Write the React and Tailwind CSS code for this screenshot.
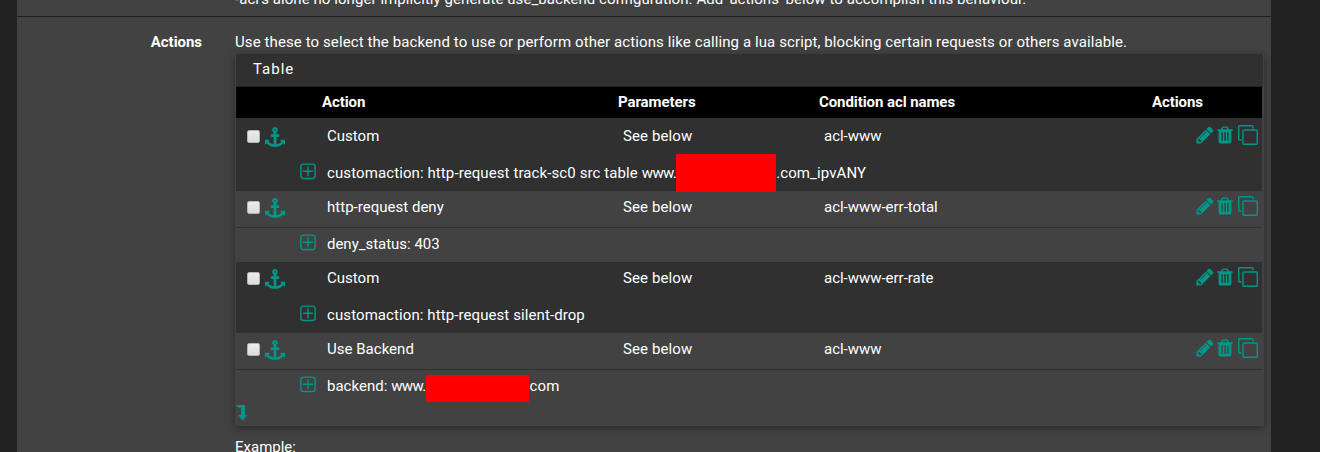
const PATHS = {
  anchor:
    'M960 256q0-26-19-45t-45-19-45 19-19 45 19 45 45 19 45-19 19-45zm832 928v352q0 22-20 30-8 2-12 2-12 0-23-9l-93-93q-119 143-318.5 226.5t-429.5 83.5-429.5-83.5-318.5-226.5l-93 93q-9 9-23 9-4 0-12-2-20-8-20-30v-352q0-14 9-23t23-9h352q22 0 30 20 8 19-7 35l-100 100q67 91 189.5 153.5t271.5 82.5v-647h-192q-26 0-45-19t-19-45v-128q0-26 19-45t45-19h192v-163q-58-34-93-92.5t-35-128.5q0-106 75-181t181-75 181 75 75 181q0 70-35 128.5t-93 92.5v163h192q26 0 45 19t19 45v128q0 26-19 45t-45 19h-192v647q149-20 271.5-82.5t189.5-153.5l-100-100q-15-16-7-35 8-20 30-20h352q14 0 23 9t9 23z',
  pencil:
    'M491 1536l91-91-235-235-91 91v107h128v128h107zm523-928q0-22-22-22-10 0-17 7l-542 542q-7 7-7 17 0 22 22 22 10 0 17-7l542-542q7-7 7-17zm-54-192l416 416-832 832h-416v-416zm683 96q0 53-37 90l-166 166-416-416 166-165q36-38 90-38 53 0 91 38l235 234q37 39 37 91z',
  trash:
    'M704 1376v-704q0-14-9-23t-23-9h-64q-14 0-23 9t-9 23v704q0 14 9 23t23 9h64q14 0 23-9t9-23zm256 0v-704q0-14-9-23t-23-9h-64q-14 0-23 9t-9 23v704q0 14 9 23t23 9h64q14 0 23-9t9-23zm256 0v-704q0-14-9-23t-23-9h-64q-14 0-23 9t-9 23v704q0 14 9 23t23 9h64q14 0 23-9t9-23zm-544-992h448l-48-117q-7-9-17-11h-317q-10 2-17 11zm928 32v64q0 14-9 23t-23 9h-96v948q0 83-47 143.5t-113 60.5h-832q-66 0-113-58.5t-47-141.5v-952h-96q-14 0-23-9t-9-23v-64q0-14 9-23t23-9h309l70-167q15-37 54-63t79-26h320q40 0 79 26t54 63l70 167h309q14 0 23 9t9 23z',
  clone:
    'M1664 1632v-1088q0-13-9.5-22.5t-22.5-9.5h-1088q-13 0-22.5 9.5t-9.5 22.5v1088q0 13 9.5 22.5t22.5 9.5h1088q13 0 22.5-9.5t9.5-22.5zm128-1088v1088q0 66-47 113t-113 47h-1088q-66 0-113-47t-47-113v-1088q0-66 47-113t113-47h1088q66 0 113 47t47 113zm-384-384v160h-128v-160q0-13-9.5-22.5t-22.5-9.5h-1088q-13 0-22.5 9.5t-9.5 22.5v1088q0 13 9.5 22.5t22.5 9.5h160v128h-160q-66 0-113-47t-47-113v-1088q0-66 47-113t113-47h1088q66 0 113 47t47 113z',
  plus:
    'M1344 800v64q0 14-9 23t-23 9h-352v352q0 14-9 23t-23 9h-64q-14 0-23-9t-9-23v-352h-352q-14 0-23-9t-9-23v-64q0-14 9-23t23-9h352v-352q0-14 9-23t23-9h64q14 0 23 9t9 23v352h352q14 0 23 9t9 23zm128 448v-832q0-66-47-113t-113-47h-832q-66 0-113 47t-47 113v832q0 66 47 113t113 47h832q66 0 113-47t47-113zm128-832v832q0 119-84.5 203.5t-203.5 84.5h-832q-119 0-203.5-84.5t-84.5-203.5v-832q0-119 84.5-203.5t203.5-84.5h832q119 0 203.5 84.5t84.5 203.5z',
};

function Icon({ name, className = '' }) {
  return (
    <svg viewBox="0 0 1792 1792" className={`size-5 shrink-0 fill-[#009688] ${className}`}>
      <path d={PATHS[name]} />
    </svg>
  );
}

const ROWS = [
  {
    action: 'Custom',
    acl: 'acl-www',
    dark: true,
    before: 'customaction: http-request track-sc0 src table ',
    host: 'www.',
    tracking: 'tracking-[0.1px]',
    bar: 'h-[38px] w-[100px] -mt-[3px]',
    after: '.com_ipvANY',
  },
  {
    action: 'http-request deny',
    acl: 'acl-www-err-total',
    before: 'deny_status: 403',
    tracking: 'tracking-[-0.02px]',
  },
  {
    action: 'Custom',
    acl: 'acl-www-err-rate',
    dark: true,
    before: 'customaction: http-request silent-drop',
    tracking: 'tracking-[0.09px]',
  },
  {
    action: 'Use Backend',
    acl: 'acl-www',
    before: 'backend: ',
    host: 'www.',
    tracking: 'tracking-[0.02px]',
    bar: 'h-[27px] w-[103px] mt-[5px] mr-px',
    after: 'com',
  },
];

const COLS = 'grid grid-cols-[86px_296px_201px_333px_1fr]';

function Row({ row }) {
  return (
    <div className={row.dark ? 'bg-[#303030]' : 'bg-[#424242]'}>
      <div className={`${COLS} h-9 leading-[32px]`}>
        <div className="flex pl-[11px]">
          <span className="mt-[10px] size-[13px] rounded-[2px] border border-[#b4b4b4] bg-linear-to-b from-[#ececec] to-[#dcdcdc]" />
          <Icon name="anchor" className="ml-[5px] mt-[7px]" />
        </div>
        <span className="pl-[5px] tracking-[0.02px]">{row.action}</span>
        <span className="pl-[5px]">See below</span>
        <span className="pl-[5px] tracking-[-0.02px]">{row.acl}</span>
        <div className="flex pl-[43.3px]">
          <Icon name="pencil" className="mt-[5px]" />
          <Icon name="trash" className="mt-[5px]" />
          <Icon name="clone" className="ml-[2.7px] mt-[5px]" />
        </div>
      </div>
      <div className="flex h-[35px] items-start border-t border-[#303030] pl-[62px] leading-[33px]">
        <Icon name="plus" className="-ml-[0.5px] mt-[5px]" />
        <span className={`ml-[9.5px] whitespace-pre ${row.tracking}`}>
          {row.before}
          {row.host && <span className="tracking-[-0.6px]">{row.host}</span>}
        </span>
        {row.bar && <span className={`${row.bar} relative z-10 shrink-0 rounded-[1px] bg-[#ff0000]`} />}
        {row.after && <span>{row.after}</span>}
      </div>
    </div>
  );
}

export default function App() {
  return (
    <div className="flex h-[452px] justify-center overflow-hidden bg-[#222222] pl-[17px] pr-[49px] font-['Roboto',sans-serif] text-[15px] tracking-[0.1px] text-white">
      <main className="w-[1254px] shrink-0 bg-[#424242]">
        <div className="flex h-[17px] items-end border-b border-[#212121] pl-[218px]">
          <p className="mb-[7px] leading-5 tracking-[0.067px]">
            -acl's alone no longer implicitly generate use_backend configuration. Add 'actions' below to accomplish this behaviour.
          </p>
        </div>
        <div className="flex">
          <div className="w-[185px] shrink-0 pt-[15px] text-right font-bold leading-5 tracking-[-0.05px]">Actions</div>
          <div className="ml-[33px] w-[1029px] shrink-0 pt-[15px]">
            <p className="h-[22px] leading-5">
              Use these to select the backend to use or perform other actions like calling a lua script, blocking certain
              requests or others available.
            </p>
            <section className="h-[372px] border-l border-[#424242] bg-[#424242] shadow-[0_2px_8px_rgba(0,0,0,0.38)]">
              <h2 className="mr-px h-[33px] border-b border-[#212121] bg-[#303030] pl-[17px] leading-[30px] tracking-[1px]">
                Table
              </h2>
              <div className="mr-[2px]">
                <div className={`${COLS} h-[31px] bg-black font-bold leading-[31px] tracking-[-0.08px]`}>
                  <span />
                  <span>Action</span>
                  <span>Parameters</span>
                  <span>Condition acl names</span>
                  <span>Actions</span>
                </div>
                <div className="bg-[#303030] pt-[2px]">
                  {ROWS.map((row, i) => (
                    <Row key={i} row={row} />
                  ))}
                </div>
              </div>
              <svg viewBox="0 0 11 16" className="mt-[1px] h-4 w-[11px] fill-[#009688]">
                <path d="M0.3 0H8.3q.7 0 .7.7V10H10.4q.8 0 .4.6L7 15.2q-.4.5-.8 0L2.5 10.6Q2 10 2.8 10H5V2.5H2.5Q2.3 2.5 2.1 2.3L.1.5Q-.1 0 .3 0Z" />
              </svg>
            </section>
            <p className="mt-[11px] leading-5 tracking-normal">Example:</p>
          </div>
        </div>
      </main>
    </div>
  );
}
